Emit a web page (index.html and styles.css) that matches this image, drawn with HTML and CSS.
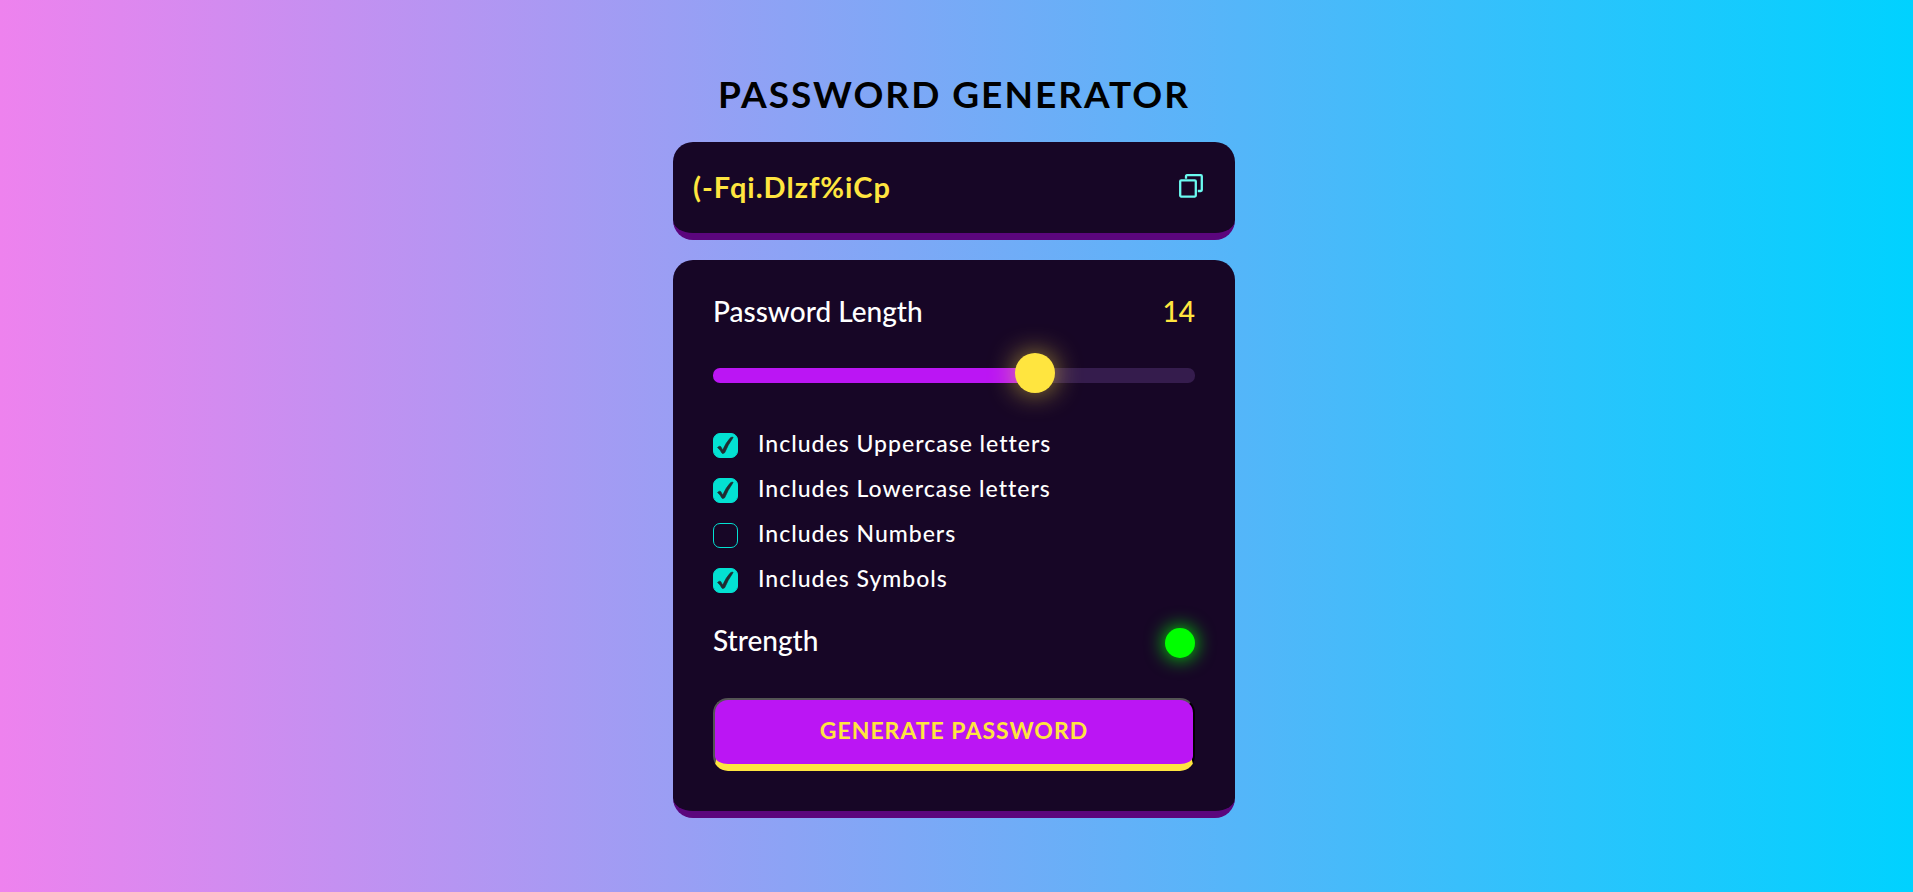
FILE: index.html
```html
<!DOCTYPE html>
<html lang="en">
<head>
<meta charset="utf-8">
<meta name="viewport" content="width=device-width, initial-scale=1">
<title>Password Generator</title>
<link rel="stylesheet" href="styles.css">
</head>
<body>
<main class="container">
  <h1 class="title">PASSWORD GENERATOR</h1>
  <section class="card display">
    <output class="password">(-Fqi.Dlzf%iCp</output>
    <button class="copy" type="button" aria-label="Copy password">
      <svg viewBox="0 0 24 24" width="24" height="24" fill="none" stroke="currentColor" stroke-width="2.3" stroke-linejoin="round" stroke-linecap="butt" aria-hidden="true">
        <rect x="1.200" y="6.300" width="15.600" height="16.300" rx="1"/>
        <path d="M7 4.800V2.200q0-1 1-1h13.800q1 0 1 1v13.800q0 1-1 1h-3"/>
      </svg>
    </button>
  </section>
  <section class="card settings">
    <div class="row">
      <label class="label" for="length">Password Length</label>
      <output class="label count" for="length">14</output>
    </div>
    <input class="slider" id="length" type="range" min="1" max="20" value="14">
    <div class="options">
      <div class="option">
        <span class="box"><input type="checkbox" id="upper" checked><svg class="tick" viewBox="0 0 25 25" aria-hidden="true"><path d="M4.500 14.500q2-2 3.200-1l2 3.500q3.500-8 8-12.500l2-.5q.7.200 0 1.200-5 7-8 14.500-1.500 1.200-2.700.5-1.500-3.200-4.500-5.700z"/></svg></span>
        <label for="upper">Includes Uppercase letters</label>
      </div>
      <div class="option">
        <span class="box"><input type="checkbox" id="lower" checked><svg class="tick" viewBox="0 0 25 25" aria-hidden="true"><path d="M4.500 14.500q2-2 3.200-1l2 3.500q3.500-8 8-12.500l2-.5q.7.200 0 1.200-5 7-8 14.500-1.500 1.200-2.700.5-1.500-3.200-4.500-5.700z"/></svg></span>
        <label for="lower">Includes Lowercase letters</label>
      </div>
      <div class="option">
        <span class="box"><input type="checkbox" id="numbers"></span>
        <label for="numbers">Includes Numbers</label>
      </div>
      <div class="option">
        <span class="box"><input type="checkbox" id="symbols" checked><svg class="tick" viewBox="0 0 25 25" aria-hidden="true"><path d="M4.500 14.500q2-2 3.200-1l2 3.500q3.500-8 8-12.500l2-.5q.7.200 0 1.200-5 7-8 14.500-1.500 1.200-2.700.5-1.500-3.200-4.500-5.700z"/></svg></span>
        <label for="symbols">Includes Symbols</label>
      </div>
    </div>
    <div class="row strength">
      <span class="label">Strength</span>
      <span class="indicator"></span>
    </div>
    <button class="generate" type="button">GENERATE PASSWORD</button>
  </section>
</main>
</body>
</html>
```
FILE: styles.css
```css
* { box-sizing: border-box; margin: 0; }
body {
  min-height: 100vh;
  display: flex;
  align-items: center;
  justify-content: center;
  padding-right: 5px;
  background: linear-gradient(to right, violet, #00d2ff);
  font-family: Lato, "Open Sans", sans-serif;
  font-weight: 500;
  color: #fff;
}
.container {
  width: 100%;
  max-width: 562px;
  display: flex;
  flex-direction: column;
  gap: 20px;
}
.title {
  padding-bottom: 8px;
  color: #000;
  font-size: 37px;
  line-height: 40px;
  font-weight: 700;
  letter-spacing: 2px;
  text-align: center;
}
.card {
  background: #170626;
  border-radius: 20px;
  border-bottom: 7px solid #5b067d;
}
.display {
  display: flex;
  align-items: center;
  justify-content: space-between;
  padding: 28px 32px 29px 20px;
}
.password {
  color: #ffe53f;
  font-size: 29px;
  line-height: 34px;
  font-weight: 700;
  letter-spacing: 1px;
}
.copy {
  display: flex;
  padding: 0 0 3px;
  border: 0;
  background: none;
  color: #6bfaf0;
  cursor: pointer;
}
.settings {
  display: flex;
  flex-direction: column;
  padding: 35px 40px 40px;
}
.row {
  display: flex;
  justify-content: space-between;
}
.label { font-size: 28px; line-height: 32px; }
.count { color: #ffe53f; }
.slider {
  appearance: none;
  width: 100%;
  height: 15px;
  margin-top: 41px;
  border-radius: 7px;
  background: linear-gradient(#bb15f4, #bb15f4) 0 / 67% 100% no-repeat #351c4d;
  cursor: pointer;
}
.slider::-webkit-slider-runnable-track { height: 15px; }
.slider::-webkit-slider-thumb {
  appearance: none;
  width: 40px;
  height: 40px;
  margin-top: -15px;
  border-radius: 50%;
  background: #ffe53f;
  box-shadow: 0 0 30px -4px #ffe53f;
}
.options {
  display: flex;
  flex-direction: column;
  gap: 20px;
  margin-top: 50px;
}
.option {
  display: flex;
  gap: 20px;
  font-size: 23px;
  line-height: 20px;
  letter-spacing: 1px;
}
.box { display: grid; width: 25px; height: 25px; }
.box > * { grid-area: 1 / 1; width: 25px; height: 25px; }
.box input {
  appearance: none;
  border: 1px solid #03e1d2;
  border-radius: 7px;
}
.box input:checked { background: #03e1d2; }
.tick {
  fill: #202c30;
  stroke: #202c30;
  stroke-width: 0.6;
  pointer-events: none;
}
.strength { margin-top: 35px; }
.strength .label { line-height: 24px; }
.indicator {
  width: 30px;
  height: 30px;
  border-radius: 50%;
  background: #0f0;
  box-shadow: 0 0 20px #0f0;
}
.generate {
  margin-top: 40px;
  padding: 15px 20px 19px;
  border: 2px outset #000;
  border-bottom: 7px solid #ffe53f;
  border-radius: 15px;
  background: #bb15f4;
  color: #ffe53f;
  font: 700 23px/30px Lato, "Open Sans", sans-serif;
  letter-spacing: 1px;
  cursor: pointer;
}
```
